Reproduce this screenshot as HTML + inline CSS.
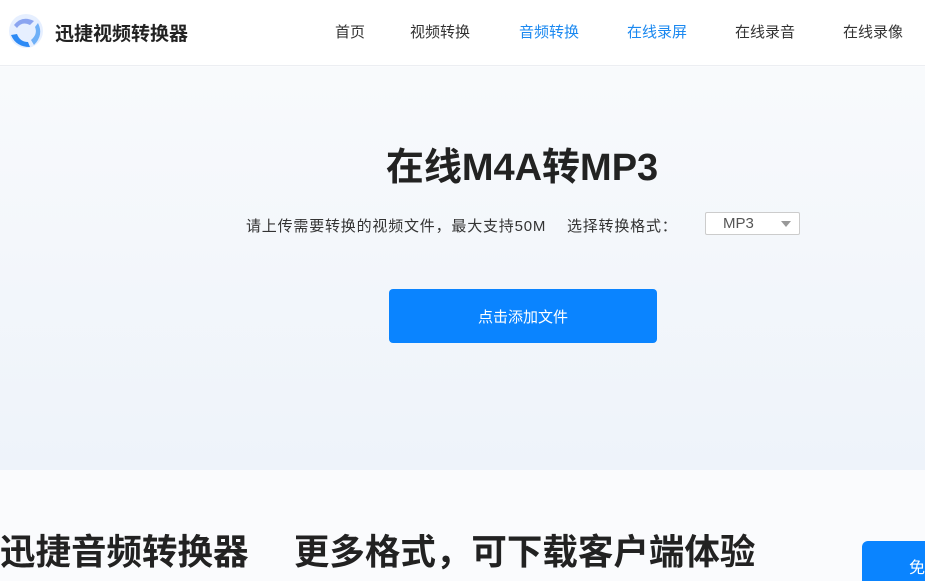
<!DOCTYPE html>
<html><head><meta charset="utf-8"><style>
*{margin:0;padding:0;box-sizing:border-box}
body{width:925px;height:573px;overflow:hidden;position:relative;background:#fafbfd;font-family:"Liberation Sans","Noto Sans CJK SC",sans-serif}
.hdr{position:absolute;left:0;top:0;width:925px;height:66px;background:#fff;border-bottom:1px solid #eceef2}
.logo{position:absolute;left:55px;top:19px;font-size:19px;font-weight:bold;color:#222}
.nav{position:absolute;top:21px;font-size:15px;color:#333}
.hero{position:absolute;left:0;top:67px;width:925px;height:403px;background:linear-gradient(#f8fafc,#eef3fa)}
h1{position:absolute;left:0;width:1044px;text-align:center;top:136px;font-size:38px;color:#222;font-weight:bold;white-space:nowrap}
.desc{position:absolute;left:246px;top:215px;font-size:15px;color:#333;white-space:nowrap;letter-spacing:0.8px}
.sel{position:absolute;left:705px;top:212px;width:95px;height:23px;border:1px solid #ccc;border-radius:2px;background:#fff;font-size:15px;color:#555;padding-left:17px;line-height:21px}
.sel:after{content:"";position:absolute;right:8px;top:8px;border:5px solid transparent;border-top:6px solid #999}
.btn{position:absolute;left:389px;top:289px;width:268px;height:54px;background:#0a84ff;border-radius:4px;color:#fff;font-size:15px;text-align:center;line-height:58px}
.bt{position:absolute;left:0;top:524px;font-size:35.5px;font-weight:bold;color:#222;white-space:nowrap}
.fb{position:absolute;left:862px;top:541px;width:80px;height:40px;background:#0a84ff;border-radius:6px 0 0 0;color:#fff;font-size:16px;padding:13px 0 0 47px}
</style></head><body>
<div class="hdr">
<svg style="position:absolute;left:8px;top:13px" width="36" height="36" viewBox="0 0 36 36"><circle cx="18" cy="18" r="17" fill="#e6efff"/><path d="M6 12 Q14 2 26 8 L22 12 Q14 8 9 15Z" fill="#8aa4f0"/><path d="M30 10 Q36 22 26 32 L23 27 Q30 21 27 14Z" fill="#6fb0f7"/><path d="M22 34 Q8 34 3 22 L9 21 Q12 29 20 29Z" fill="#2d8af5"/></svg>
<div class="logo">迅捷视频转换器</div>
<div class="nav" style="left:335px">首页</div>
<div class="nav" style="left:410px">视频转换</div>
<div class="nav" style="left:519px;color:#1a88f0">音频转换</div>
<div class="nav" style="left:627px;color:#1a88f0">在线录屏</div>
<div class="nav" style="left:735px">在线录音</div>
<div class="nav" style="left:843px">在线录像</div>
</div>
<div class="hero"></div>
<h1>在线M4A转MP3</h1>
<div class="desc">请上传需要转换的视频文件，最大支持50M　 选择转换格式：</div>
<div class="sel">MP3</div>
<div class="btn">点击添加文件</div>
<div class="bt">迅捷音频转换器　 更多格式，可下载客户端体验</div>
<div class="fb">免</div>
</body></html>
